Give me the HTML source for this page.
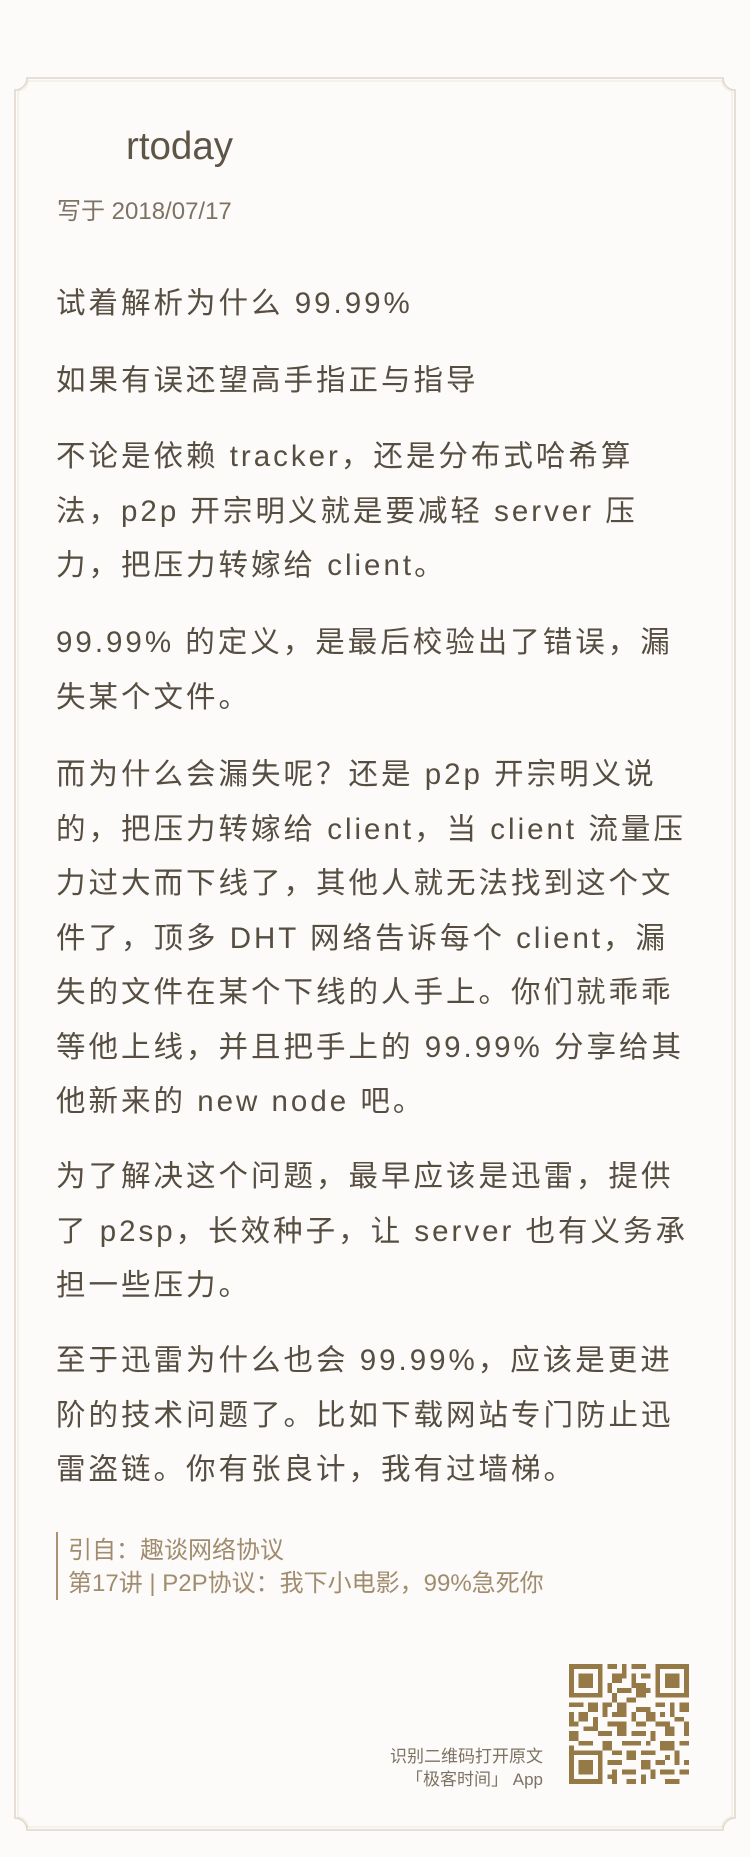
<!DOCTYPE html>
<html><head><meta charset="utf-8"><style>
html,body{margin:0;padding:0;background:#fdfbf9;}
body{width:750px;height:1857px;position:relative;overflow:hidden;font-family:"Liberation Sans","Noto Sans CJK SC",sans-serif;color:#5b5245;}
.a{position:absolute;white-space:nowrap;}
.p{position:absolute;left:56px;font-size:29.5px;letter-spacing:3px;line-height:54.5px;white-space:nowrap;color:#574e42;}
</style></head><body>
<svg width="750" height="1857" style="position:absolute;left:0;top:0">
<path d="M27,78 H723 A12,12 0 0 0 735,90 V1818 A12,12 0 0 0 723,1830 H27 A12,12 0 0 0 15,1818 V90 A12,12 0 0 0 27,78 Z" fill="none" stroke="#e0d6c9" stroke-width="1.5"/>
<path d="M28,81 H722 A11,11 0 0 0 732,91 V1817 A11,11 0 0 0 722,1827 H28 A11,11 0 0 0 18,1817 V91 A11,11 0 0 0 28,81 Z" fill="none" stroke="#ece5dc" stroke-width="1"/>
</svg>
<div class="a" style="left:126px;top:125px;font-size:38.5px;color:#5e5546;">rtoday</div>
<div class="a" style="left:57px;top:191px;font-size:24px;color:#7d7263;">写于 2018/07/17</div>
<div class="p" style="top:277px">试着解析为什么 99.99%</div>
<div class="p" style="top:354px">如果有误还望高手指正与指导</div>
<div class="p" style="top:430px">不论是依赖 tracker，还是分布式哈希算<br>法，p2p 开宗明义就是要减轻 server 压<br>力，把压力转嫁给 client。</div>
<div class="p" style="top:616px">99.99% 的定义，是最后校验出了错误，漏<br>失某个文件。</div>
<div class="p" style="top:748px">而为什么会漏失呢？还是 p2p 开宗明义说<br>的，把压力转嫁给 client，当 client 流量压<br>力过大而下线了，其他人就无法找到这个文<br>件了，顶多 DHT 网络告诉每个 client，漏<br>失的文件在某个下线的人手上。你们就乖乖<br>等他上线，并且把手上的 99.99% 分享给其<br>他新来的 new node 吧。</div>
<div class="p" style="top:1150px">为了解决这个问题，最早应该是迅雷，提供<br>了 p2sp，长效种子，让 server 也有义务承<br>担一些压力。</div>
<div class="p" style="top:1334px">至于迅雷为什么也会 99.99%，应该是更进<br>阶的技术问题了。比如下载网站专门防止迅<br>雷盗链。你有张良计，我有过墙梯。</div>
<div style="position:absolute;left:56px;top:1532px;width:2px;height:68px;background:#a89272"></div>
<div class="a" style="left:68px;top:1534px;font-size:24px;line-height:33px;color:#a08c6e;">引自：趣谈网络协议<br>第17讲 | P2P协议：我下小电影，99%急死你</div>
<div class="a" style="right:207px;top:1745px;font-size:17px;line-height:23px;text-align:right;color:#7d7263;">识别二维码打开原文<br>「极客时间」 App</div>
<svg style="position:absolute;left:569px;top:1664px" width="120" height="120" viewBox="0 0 25 25" shape-rendering="crispEdges">
<g fill="#957a48">
<path d="M0,0h7v7h-7zM1,1v5h5v-5zM2,2h3v3h-3z" fill-rule="evenodd"/>
<path d="M18,0h7v7h-7zM19,1v5h5v-5zM20,2h3v3h-3z" fill-rule="evenodd"/>
<path d="M0,18h7v7h-7zM1,19v5h5v-5zM2,20h3v3h-3z" fill-rule="evenodd"/>
<path d="M8,0h2v1h-2zM11,0h1v3h-1zM13,0h3v1h-3zM9,2h2v2h-2zM13,2h1v3h-1zM15,2h2v1h-2zM8,4h1v2h-1zM10,5h3v1h-3zM14,4h2v3h-2zM16,5h1v1h-1zM9,6h1v2h-1zM12,7h2v1h-2zM8,8h1v1h-1z"/>
<path d="M0,8h3v1h-3zM4,8h2v2h-2zM7,8h1v3h-1zM10,8h2v2h-2zM14,9h3v1h-3zM18,8h2v1h-2zM21,8h1v3h-1zM23,8h2v2h-2zM0,10h1v3h-1zM2,10h2v2h-2zM9,10h3v1h-3zM13,10h1v2h-1zM16,10h2v2h-2zM19,10h1v1h-1zM22,11h2v1h-2zM5,11h1v2h-1zM1,12h1v1h-1zM3,13h3v1h-3zM8,12h4v1h-4zM14,12h2v1h-2zM18,12h3v1h-3zM24,12h1v3h-1zM0,14h2v2h-2zM6,14h3v1h-3zM10,13h2v2h-2zM13,14h3v1h-3zM17,14h1v2h-1zM20,13h2v2h-2zM2,16h3v1h-3zM7,16h2v2h-2zM11,16h4v1h-4zM16,16h1v1h-1zM19,16h3v2h-3zM23,16h2v1h-2zM0,17h1v1h-1zM9,18h2v1h-2zM12,18h2v2h-2zM15,18h3v1h-3zM20,19h1v1h-1zM22,18h1v3h-1zM8,20h3v1h-3zM15,20h2v2h-2zM18,20h2v1h-2zM9,22h1v3h-1zM11,22h3v1h-3zM17,22h1v2h-1zM19,22h3v1h-3zM23,22h2v1h-2zM12,24h2v1h-2zM15,23h1v2h-1zM20,24h3v1h-3zM24,20h1v1h-1zM8,23h1v1h-1z"/>
</g></svg>
</body></html>
